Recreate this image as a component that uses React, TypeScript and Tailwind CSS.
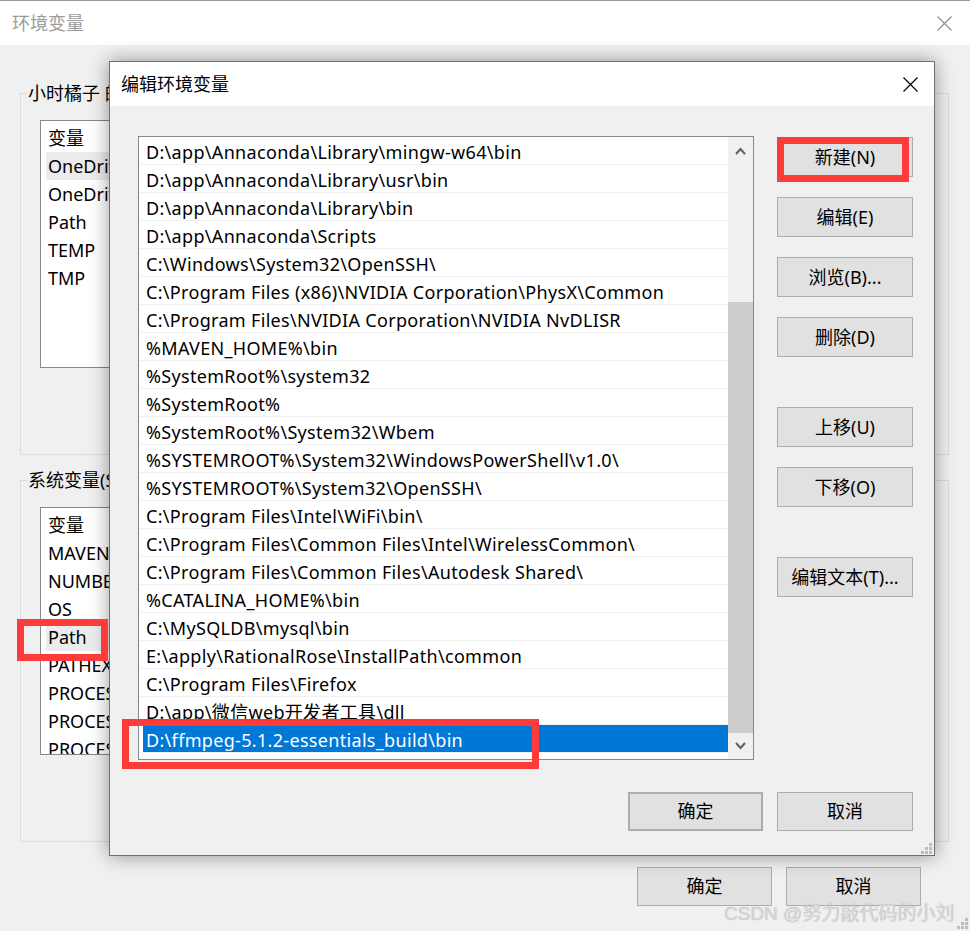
import clsx from 'clsx';

const FONT = { fontFamily: '"Noto Sans", "Noto Sans CJK SC", sans-serif' };

const pathItems = [
    'D:\\app\\Annaconda\\Library\\mingw-w64\\bin',
    'D:\\app\\Annaconda\\Library\\usr\\bin',
    'D:\\app\\Annaconda\\Library\\bin',
    'D:\\app\\Annaconda\\Scripts',
    'C:\\Windows\\System32\\OpenSSH\\',
    'C:\\Program Files (x86)\\NVIDIA Corporation\\PhysX\\Common',
    'C:\\Program Files\\NVIDIA Corporation\\NVIDIA NvDLISR',
    '%MAVEN_HOME%\\bin',
    '%SystemRoot%\\system32',
    '%SystemRoot%',
    '%SystemRoot%\\System32\\Wbem',
    '%SYSTEMROOT%\\System32\\WindowsPowerShell\\v1.0\\',
    '%SYSTEMROOT%\\System32\\OpenSSH\\',
    'C:\\Program Files\\Intel\\WiFi\\bin\\',
    'C:\\Program Files\\Common Files\\Intel\\WirelessCommon\\',
    'C:\\Program Files\\Common Files\\Autodesk Shared\\',
    '%CATALINA_HOME%\\bin',
    'C:\\MySQLDB\\mysql\\bin',
    'E:\\apply\\RationalRose\\InstallPath\\common',
    'C:\\Program Files\\Firefox',
    'D:\\app\\微信web开发者工具\\dll',
    'D:\\ffmpeg-5.1.2-essentials_build\\bin',
];

const userVars = ['变量', 'OneDrive', 'OneDriveConsumer', 'Path', 'TEMP', 'TMP'];
const systemVars = [
    '变量',
    'MAVEN_HOME',
    'NUMBER_OF_PROCESSORS',
    'OS',
    'Path',
    'PATHEXT',
    'PROCESSOR_ARCHITECTURE',
    'PROCESSOR_IDENTIFIER',
    'PROCESSOR_LEVEL',
];

function CloseIcon({ color }: { color: string }) {
    return (
        <svg width="15" height="15" viewBox="0 0 15 15">
            <path d="M0.5 0.5L14.5 14.5M14.5 0.5L0.5 14.5" stroke={color} strokeWidth="1.2" fill="none" />
        </svg>
    );
}

function Grip() {
    return (
        <svg width="11" height="11" viewBox="0 0 11 11">
            {[
                [8, 0],
                [4, 4],
                [8, 4],
                [0, 8],
                [4, 8],
                [8, 8],
            ].map(([x, y]) => (
                <rect key={`${x}-${y}`} x={x} y={y} width="3" height="3" fill="#bcbcbc" />
            ))}
        </svg>
    );
}

function WinButton({ label, className }: { label: string; className?: string }) {
    return (
        <div
            className={clsx(
                'flex items-center justify-center bg-[#e1e1e1] border border-[#adadad] text-[18px] text-black',
                className
            )}
        >
            {label}
        </div>
    );
}

// group box of the window behind; the dialog covers everything right of x=109
function GroupBox({ label, items, highlight }: { label: string; items: string[]; highlight: number }) {
    return (
        <div className="relative border border-[#dcdcdc] h-[362px] pt-[26px] pl-[19px]">
            <span className="absolute left-[6px] top-[-14px] max-w-[82px] overflow-hidden whitespace-nowrap bg-[#f0f0f0] px-[1px] text-[18px] leading-[26px] text-black">
                {label}
            </span>
            <div className="w-[72px] h-[248px] border border-[#828790] bg-white overflow-hidden pt-[3px]">
                {items.map((t, i) => (
                    <div
                        key={t + i}
                        className={clsx(
                            'ml-[5px] h-[28px] flex items-center px-[2px] text-[18px] text-black whitespace-nowrap',
                            i === highlight && 'bg-[#ececec]'
                        )}
                    >
                        {t}
                    </div>
                ))}
            </div>
        </div>
    );
}

function PathList() {
    return (
        <div className="w-[616px] h-[624px] border border-[#828790] bg-white flex shrink-0">
            <div className="flex-1 flex flex-col">
                {pathItems.map((t, i) => {
                    const selected = i === pathItems.length - 1;
                    return (
                        <div key={t} className="h-[28px] border-b border-[#f0f0f0] flex">
                            <div
                                className={clsx(
                                    'ml-[4px] flex-1 flex items-center pl-[3px] pt-[3px] text-[18px] tracking-[0.32px] whitespace-nowrap',
                                    selected ? 'bg-[#0078d7] text-white' : 'text-black'
                                )}
                            >
                                {t}
                            </div>
                        </div>
                    );
                })}
            </div>
            <div className="w-[25px] bg-[#f0f0f0] flex flex-col">
                <div className="h-[25px] flex items-center justify-center pt-[2px]">
                    <svg width="11" height="8" viewBox="0 0 11 8">
                        <polyline points="1,7 5.5,2 10,7" stroke="#606060" strokeWidth="2" fill="none" />
                    </svg>
                </div>
                <div className="flex-1" />
                <div className="h-[431px] bg-[#cdcdcd]" />
                <div className="h-[26px] flex items-center justify-center">
                    <svg width="11" height="8" viewBox="0 0 11 8">
                        <polyline points="1,1 5.5,6 10,1" stroke="#606060" strokeWidth="2" fill="none" />
                    </svg>
                </div>
            </div>
        </div>
    );
}

function EditDialog() {
    return (
        <div className="absolute left-[109px] top-[61px] w-[826px] h-[795px] border border-[#707070] bg-[#f0f0f0] shadow-[0_0_18px_rgba(0,0,0,0.4)] flex flex-col">
            <div className="h-[44px] shrink-0 bg-white flex items-center justify-between pl-[11px] pr-[16px]">
                <span className="text-[18px] text-black">编辑环境变量</span>
                <CloseIcon color="#000" />
            </div>
            <div className="relative flex-1 flex flex-col pt-[30px] pl-[28px] pr-[21px]">
                <div className="flex">
                    <PathList />
                    <div className="ml-[23px] w-[136px] flex flex-col pt-[1px]">
                        <WinButton label="新建(N)" className="h-[40px]" />
                        <WinButton label="编辑(E)" className="h-[40px] mt-[20px]" />
                        <WinButton label="浏览(B)..." className="h-[40px] mt-[20px]" />
                        <WinButton label="删除(D)" className="h-[40px] mt-[20px]" />
                        <WinButton label="上移(U)" className="h-[40px] mt-[50px]" />
                        <WinButton label="下移(O)" className="h-[40px] mt-[20px]" />
                        <WinButton label="编辑文本(T)..." className="h-[40px] mt-[50px]" />
                    </div>
                </div>
                <div className="flex justify-end gap-[14px] mt-[32px]">
                    <WinButton label="确定" className="w-[135px] h-[39px] border-2 border-[#0078d7]" />
                    <WinButton label="取消" className="w-[136px] h-[39px]" />
                </div>
                <div className="absolute right-[2px] bottom-[1px] flex">
                    <Grip />
                </div>
            </div>
        </div>
    );
}

export default function App() {
    return (
        <div className="relative w-[970px] h-[931px] overflow-hidden bg-[#f0f0f0]" style={FONT}>
            {/* background window */}
            <div className="h-[45px] bg-white border-t border-[#9a9a9a] flex items-center justify-between pl-[12px] pr-[18px]">
                <span className="text-[18px] text-[#9b9b9b]">环境变量</span>
                <CloseIcon color="#8f8f8f" />
            </div>
            <div className="pt-[48px] pl-[20px] pr-[21px]">
                <GroupBox label="小时橘子 的用户变量(U)" items={userVars} highlight={1} />
                <div className="mt-[25px]">
                    <GroupBox label="系统变量(S)" items={systemVars} highlight={4} />
                </div>
                <div className="flex justify-end gap-[14px] mt-[25px] pr-[28px]">
                    <WinButton label="确定" className="w-[135px] h-[39px]" />
                    <WinButton label="取消" className="w-[135px] h-[39px]" />
                </div>
            </div>
            <div className="absolute right-[2px] bottom-[2px] flex">
                <Grip />
            </div>

            <EditDialog />

            {/* annotations */}
            <div className="absolute left-[777px] top-[137px] w-[132px] h-[45px] border-[7px] border-[#fd3b3b]" />
            <div className="absolute left-[17px] top-[619px] w-[91px] h-[42px] border-[7px] border-[#fd3b3b]" />
            <div className="absolute left-[122px] top-[719px] w-[417px] h-[50px] border-[7px] border-[#fd3b3b]" />

            <div
                className="absolute left-[724px] top-[900px] text-[19px] text-[#d6d6d6] whitespace-nowrap [text-shadow:0_0_1px_rgba(0,0,0,0.25)]"
                style={{ fontFamily: '"Liberation Sans", "Noto Sans CJK SC", sans-serif' }}
            >
                CSDN @努力敲代码的小刘
            </div>
        </div>
    );
}
